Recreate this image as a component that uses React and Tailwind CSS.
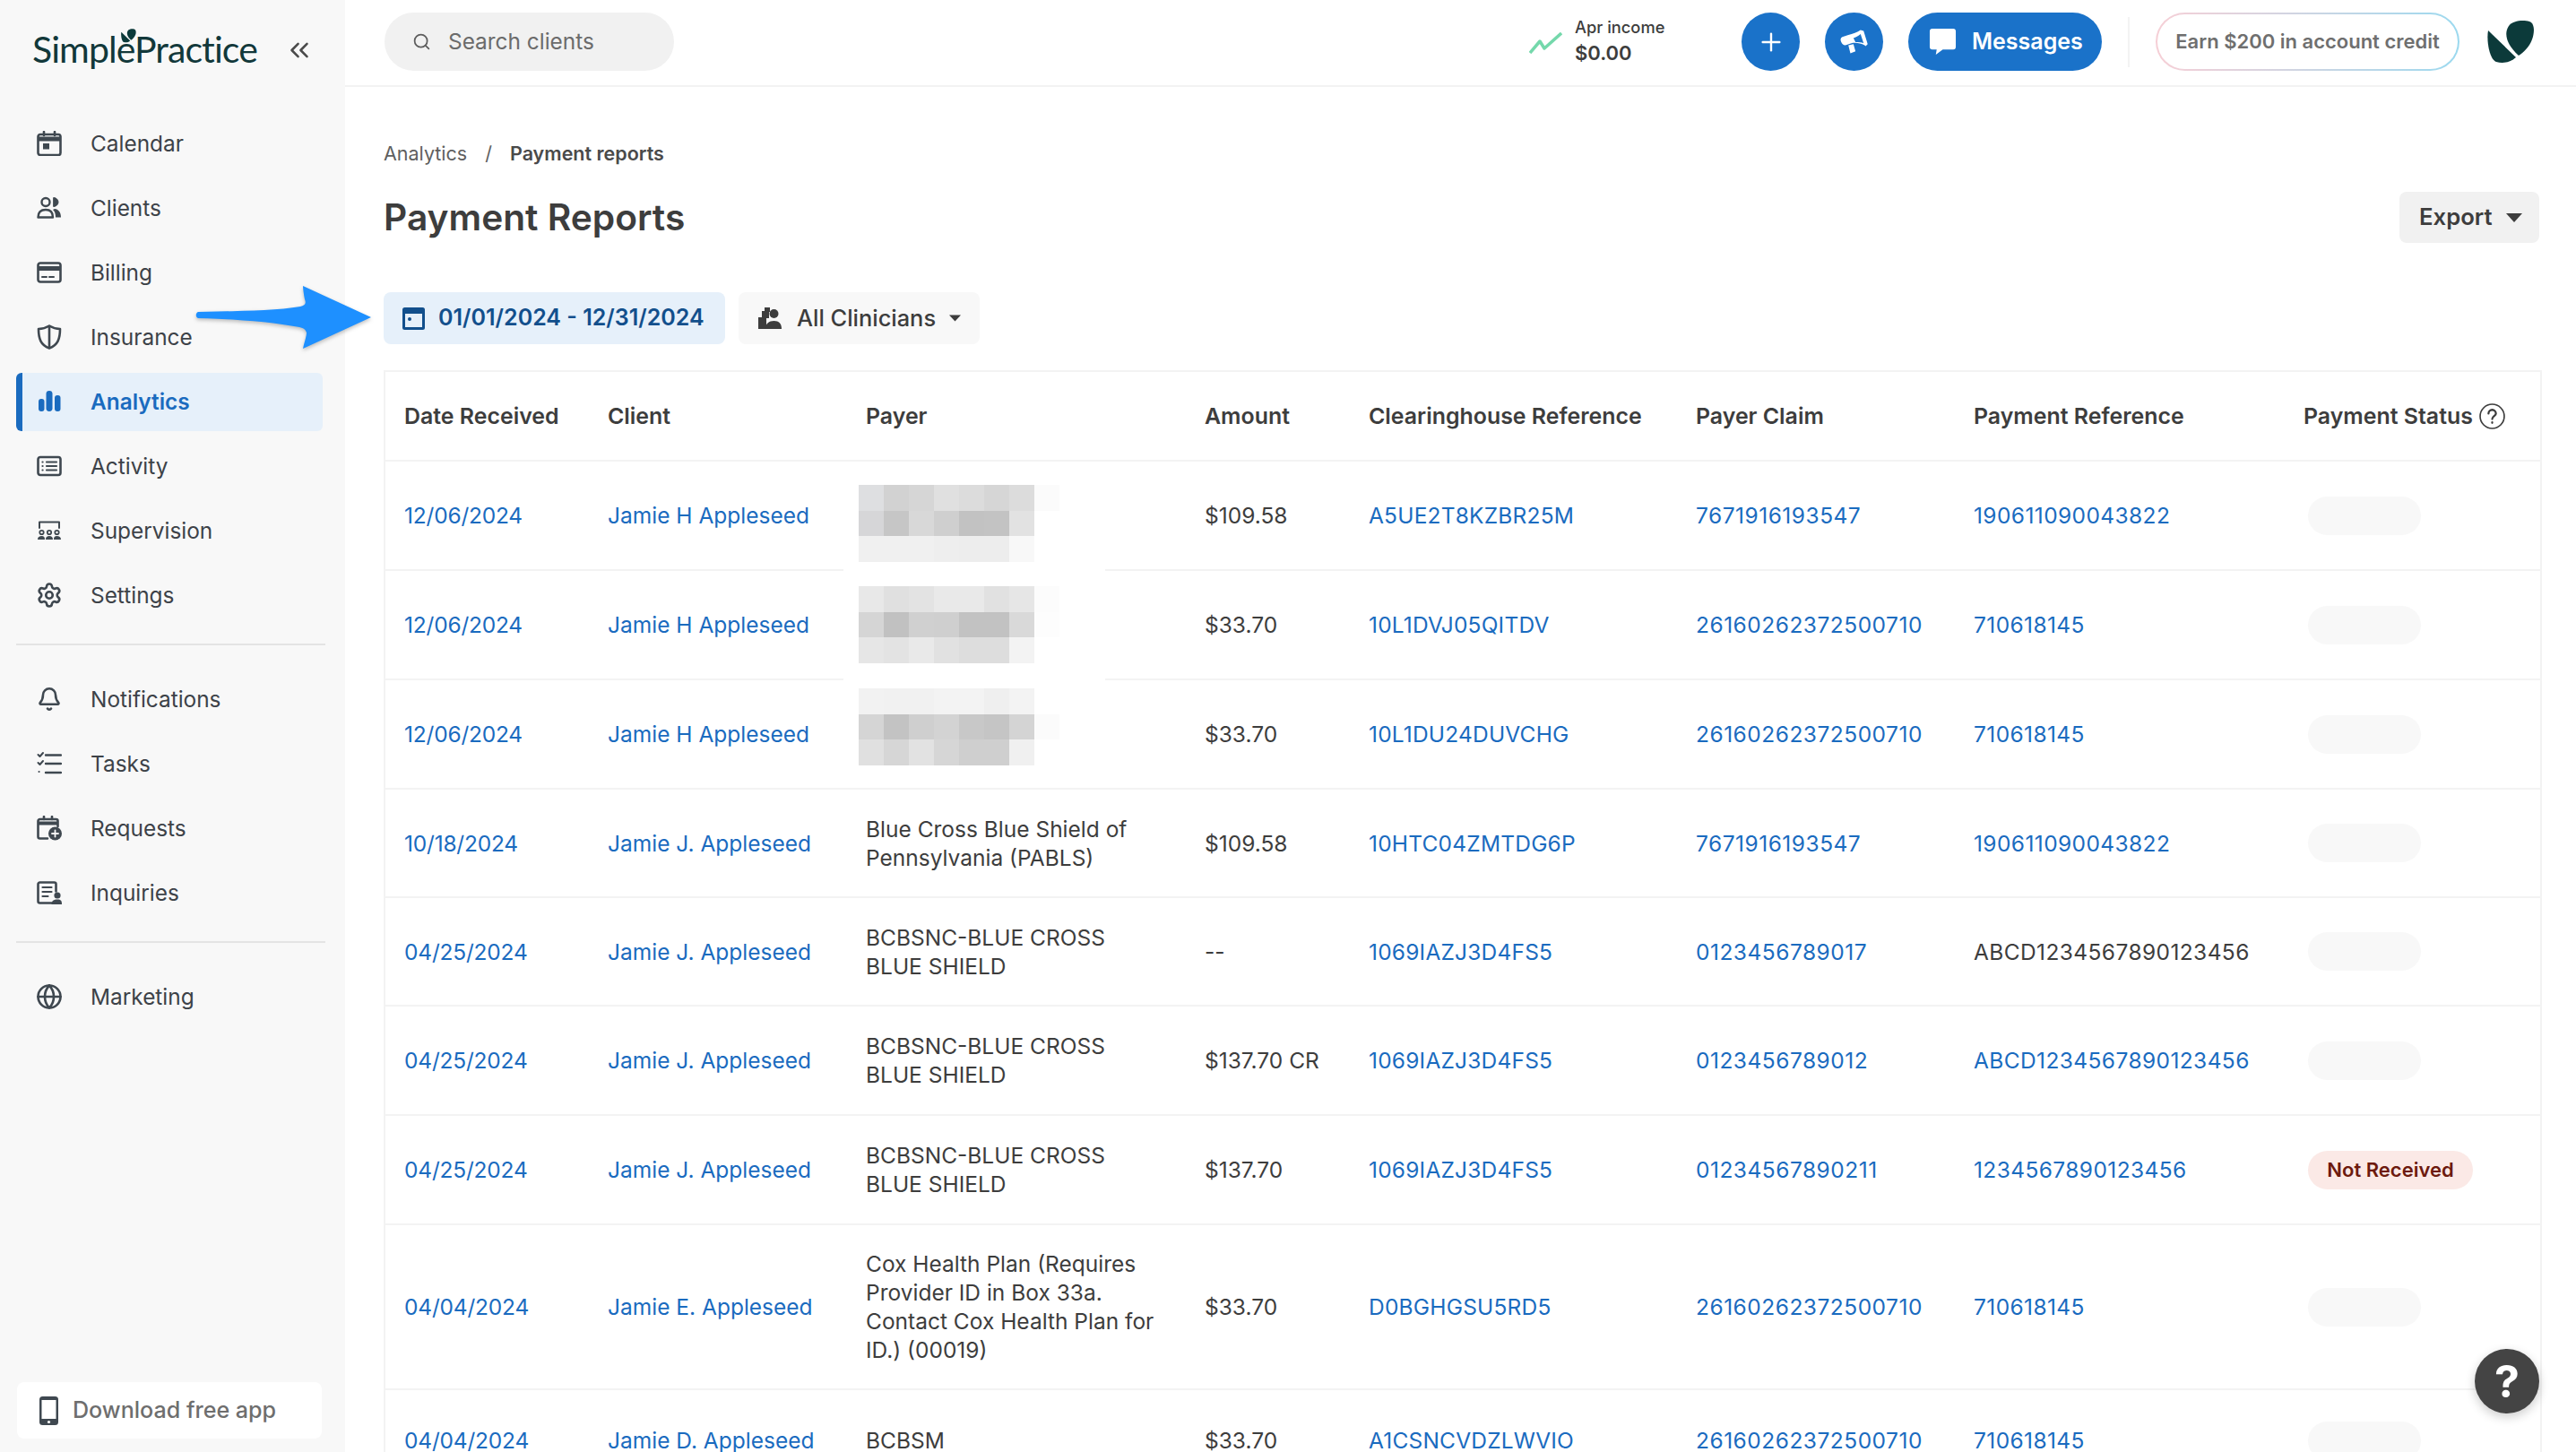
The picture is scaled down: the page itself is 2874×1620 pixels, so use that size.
import React from "react";
import { Search, Settings, Bell, Globe, Plus, ChevronsLeft } from "lucide-react";

const I = ({ children, cls = "text-[#3f4850]" }) => (
  <svg viewBox="0 0 28 28" className={`w-[28px] h-[28px] shrink-0 ${cls}`} fill="none" stroke="currentColor" strokeWidth="2.6" strokeLinecap="round" strokeLinejoin="round">{children}</svg>
);

const icons = {
  Calendar: <I><rect x="1.5" y="4" width="25" height="23" rx="2.5" /><path d="M1.5 9h25" strokeWidth="5" strokeLinecap="butt" /><path d="M8 1v4M20 1v4" /><rect x="7" y="14" width="7" height="6.5" fill="currentColor" stroke="none" /></I>,
  Clients: <I><circle cx="10" cy="7.5" r="4.5" strokeWidth="2.4" /><path d="M19 2.5a5 5 0 0 1 0 10z" fill="currentColor" stroke="currentColor" strokeWidth="1" /><path d="M1.5 24.5c0-6 3.5-8.5 8.5-8.5s8 2.5 8 8.5z" strokeWidth="2.4" /><path d="M20 15c4 .5 7 3.500 7 9.500h-6c0-4-1-7-3-8.500z" fill="currentColor" stroke="none" /></I>,
  Billing: <I><rect x="1.500" y="3.500" width="25" height="21" rx="2.500" /><path d="M1.500 9.500h25" strokeWidth="5" strokeLinecap="butt" /><path d="M6 19h5M14 19h5" strokeWidth="2" /></I>,
  Insurance: <I><path d="M14 1.500c4 2.500 8 3.500 12 3.500 0 11-2.500 18-12 21.500C4.500 23 2 16 2 5c4 0 8-1 12-3.500z" /><path d="M14 2v24" /></I>,
  Analytics: <I cls="text-[#1a6bbf]"><rect x="2" y="11" width="6.500" height="14" rx="3" fill="currentColor" stroke="none" /><rect x="10.500" y="2" width="7" height="23" rx="3.400" fill="currentColor" stroke="none" /><rect x="20" y="7" width="6.500" height="18" rx="3" fill="currentColor" stroke="none" /></I>,
  Activity: <I><rect x="1.500" y="4" width="25" height="20" rx="2.500" /><path d="M6.500 9.500h.1M6.500 14h.1M6.500 18.500h.1M11 9.500h11M11 14h11M11 18.500h11" strokeWidth="2.200" /></I>,
  Supervision: <I><path d="M3 11V4.500h22V11" strokeWidth="2" /><circle cx="5.500" cy="16" r="2.200" strokeWidth="1.800" /><circle cx="14" cy="16" r="2.200" strokeWidth="1.800" /><circle cx="22.500" cy="16" r="2.200" strokeWidth="1.800" /><path d="M1 24c0-3 2-4 4.500-4s3.500 1 3.500 4zM10 24c0-3 1.500-4 4-4s4 1 4 4zM19 24c0-3 1-4 3.500-4s4.500 1 4.500 4z" fill="currentColor" stroke="none" /></I>,
  Settings: <Settings className="w-[30px] h-[30px] text-[#3f4850] -ml-[1px] shrink-0" strokeWidth={2.1} />,
  Notifications: <Bell className="w-[28px] h-[28px] text-[#3f4850] shrink-0" strokeWidth={2.200} />,
  Tasks: <I><path d="M1.500 4l2 2 3.500-4M1.500 13l2 2 3.500-4M2.500 23h.1" strokeWidth="2" /><path d="M10 4.500h17M10 14h17M10 24h17" strokeWidth="2.400" /></I>,
  Requests: <I><path d="M12 25.500H3.500a2 2 0 0 1-2-2V6a2 2 0 0 1 2-2h18a2 2 0 0 1 2 2v6" /><path d="M1.500 8.500h22" strokeWidth="4" strokeLinecap="butt" /><path d="M8 1v3M17 1v3" /><circle cx="20.500" cy="20" r="7.500" fill="currentColor" stroke="none" /><path d="M20.500 16.500v7M17 20h7" stroke="#f8f8f8" strokeWidth="1.800" /></I>,
  Inquiries: <I><path d="M17 25.500H3.500a2 2 0 0 1-2-2v-19a2 2 0 0 1 2-2h16a2 2 0 0 1 2 2v8" /><path d="M6.500 8h10M6.500 13h10M6.500 18h6" strokeWidth="2.200" /><circle cx="23" cy="17" r="3.600" fill="currentColor" stroke="none" /><path d="M16.500 27c0-4 2.500-5.500 6.500-5.500s5 1.500 5 5.500z" fill="currentColor" stroke="none" /></I>,
  Marketing: <Globe className="w-[30px] h-[30px] text-[#3f4850] -ml-[1px] shrink-0" strokeWidth={2.100} />,
};

const Leaf = ({ cls }) => (
  <svg viewBox="0 0 53 50" className={cls} fill="#0c3a3a">
    <path d="M35 40C22 28 18 16 24 7 28 1 40 0 47 2c6 2 6 12 3 20-3 8-9 14-15 18z" />
    <path d="M1 12l31 30c-6 6-15 7-22 5C2 44-1 22 1 12z" />
  </svg>
);

const NavItem = ({ label, active }) => (
  <div className={`h-[72px] py-[3.500px] ml-[18px] ${active ? "mr-[25px]" : "mr-[18px]"}`}>
    <div className={`h-full flex items-center rounded-[6px] pl-[23px] ${active ? "bg-[#e6f0fa] border-l-[7px] border-[#1a6bbf] !pl-[16px]" : ""}`}>
      <span className="w-[60px] flex shrink-0">{icons[label]}</span>
      <span className={`text-[24.400px] ${active ? "font-semibold text-[#1a6bbf]" : "text-[#3d4248]"}`}>{label}</span>
    </div>
  </div>
);

const Sidebar = () => (
  <aside className="w-[385px] shrink-0 h-full bg-[#f8f8f8] flex flex-col">
    <div className="h-[124px] shrink-0 relative pl-[36px] pt-[27px] flex items-start">
      <span className="relative text-[41px] leading-[56px] text-[#12383a] tracking-[-0.9px] font-['Lato',sans-serif]">
        SimplePractice
        <Leaf cls="absolute left-[99px] top-[5px] w-[17px] h-[16px]" />
      </span>
      <ChevronsLeft className="absolute left-[317px] top-[39px] w-[34px] h-[34px] text-[#4a4a4a]" strokeWidth={1.800} />
    </div>
    {["Calendar", "Clients", "Billing", "Insurance", "Analytics", "Activity", "Supervision", "Settings"].map((l) => <NavItem key={l} label={l} active={l === "Analytics"} />)}
    <div className="h-[2px] bg-[#e4e4e4] mx-[18px] mt-[18px] mb-[24px] w-[345px]" />
    {["Notifications", "Tasks", "Requests", "Inquiries"].map((l) => <NavItem key={l} label={l} />)}
    <div className="h-[2px] bg-[#e4e4e4] mx-[18px] mt-[18px] mb-[24px] w-[345px]" />
    <NavItem label="Marketing" />
    <div className="mt-auto mb-[15px] ml-[19px] w-[340px] h-[63px] bg-white rounded-[8px] flex items-center pl-[25px] gap-[16px]">
      <svg viewBox="0 0 21 32" className="w-[21px] h-[32px]"><rect width="21" height="32" rx="3.500" fill="#3f4850" /><rect x="2.500" y="4" width="16" height="21" fill="#fff" /><circle cx="10.500" cy="28.500" r="1.600" fill="#fff" /></svg>
      <span className="text-[25.100px] font-medium text-[#6e6e6e]">Download free app</span>
    </div>
  </aside>
);

const Header = () => (
  <header className="h-[97px] shrink-0 border-b-2 border-[#f3f3f3] flex items-start pt-[14px] pl-[44px] pr-[46px]">
    <div className="w-[323px] h-[65px] rounded-full bg-[#f1f1f1] flex items-center pl-[31px] gap-[19px]">
      <Search className="w-[21px] h-[21px] text-[#5d5d5d]" strokeWidth={2} />
      <span className="text-[24.400px] text-[#6b6b6b]">Search clients</span>
    </div>
    <div className="ml-auto flex items-center h-[65px]">
      <svg viewBox="0 0 37 24" className="w-[37px] h-[24px] mr-[14px] mt-[2px]" fill="none" stroke="#74d8ab" strokeWidth="3.500" strokeLinejoin="round"><path d="M1 23l11-13 5 8L36 1" /></svg>
      <div className="w-[186px] text-[#3d3d3d] -mt-[4px]">
        <div className="text-[18.300px] leading-[28px] font-medium">Apr income</div>
        <div className="text-[22px] leading-[30px] font-semibold">$0.00</div>
      </div>
      <div className="w-[65px] h-[65px] rounded-full bg-[#1a72c9] flex items-center justify-center">
        <Plus className="w-[32px] h-[32px] text-white" strokeWidth={1.800} />
      </div>
      <div className="w-[65px] h-[65px] rounded-full bg-[#1a72c9] flex items-center justify-center ml-[28px]">
        <svg viewBox="0 0 30 30" className="w-[34px] h-[34px]" fill="#fff"><path d="M21 3l3 1 4 13-2 2-1-1c-4-2-9-3-13-2l-6 2c-2 0-3-1-4-3s-1-4 1-5l6-2c4-1 9-3 12-5zM21 7c-2 2-5 3-7 4l2 4c3 0 6 0 8 1zM9 18l5-1 2 7-5 2z" /></svg>
      </div>
      <div className="h-[65px] w-[216px] rounded-full bg-[#1a72c9] flex items-center pl-[23px] gap-[17px] ml-[28px]">
        <svg viewBox="0 0 32 32" className="w-[31px] h-[31px]" fill="#fff"><path d="M4 1h24a3 3 0 0 1 3 3v18a3 3 0 0 1-3 3H16l-8 6 1-6H4a3 3 0 0 1-3-3V4a3 3 0 0 1 3-3z" /></svg>
        <span className="text-[25px] font-semibold text-white">Messages</span>
      </div>
      <div className="w-[2px] h-[56px] bg-[#f3f3f3] mx-[29px]" />
      <div className="w-[339px] h-[65px] rounded-full p-[2px] bg-gradient-to-r from-[#f6cfd6] to-[#9bd9ef]">
        <div className="w-full h-full rounded-full bg-white flex items-center justify-center">
          <span className="text-[22px] font-semibold text-[#6f6f6f]">Earn $200 in account credit</span>
        </div>
      </div>
      <Leaf cls="w-[53px] h-[50px] ml-[31px]" />
    </div>
  </header>
);

const blurData = [
  { top: 9, cells: ["#dedfe1", "#d2d2d2", "#d6d6d6", "#e0e0e0", "#dcdcdc", "#d6d6d6", "#dcdcdc", "#fbfbfb", "#d6d6d8", "#c6c6c6", "#d8d8d8", "#cfcfcf", "#c2c2c2", "#c3c3c3", "#e2e2e2", "#fff", "#f0f0f0", "#f0f0f0", "#f0f0f0", "#eeeeee", "#ededed", "#ededed", "#f8f8f8", "#fff"] },
  { top: 0, cells: ["#e8e8e8", "#e0e0e0", "#e3e3e3", "#e9e9e9", "#e9e9e9", "#e1e1e1", "#e6e6e6", "#fcfcfc", "#d5d5d5", "#c1c1c1", "#d0d0d0", "#cfcfcf", "#c2c2c2", "#c2c2c2", "#d9d9d9", "#fdfdfd", "#e6e6e6", "#e3e3e3", "#e9e9e9", "#e1e1e1", "#dddddd", "#dddddd", "#f3f3f3", "#fff"] },
  { top: -8, cells: ["#f2f2f2", "#f1f1f1", "#f1f1f1", "#f3f3f3", "#f3f3f3", "#efefef", "#f3f3f3", "#fff", "#d5d5d5", "#c3c3c3", "#cfcfcf", "#d3d3d3", "#c8c8c8", "#c5c5c5", "#d4d4d4", "#fbfbfb", "#e0e0e0", "#d6d6d6", "#e2e2e2", "#d6d6d6", "#cfcfcf", "#cfcfcf", "#f0f0f0", "#fff"] },
];

const Blur = ({ v }) => (
  <div className="relative grid grid-cols-[repeat(8,28px)] grid-rows-[repeat(3,28.400px)] w-[224px] -ml-[8px]" style={{ top: blurData[v].top }}>
    {blurData[v].cells.map((c, i) => <div key={i} style={{ backgroundColor: c }} />)}
  </div>
);

const L = ({ children, cls = "" }) => <span className={`text-[#1a6bbf] ${cls}`}>{children}</span>;

const rows = [
  { h: 122, d: "12/06/2024", c: "Jamie H Appleseed", blur: 0, a: "$109.58", r: "A5UE2T8KZBR25M", cl: "7671916193547", p: "190611090043822" },
  { h: 122, d: "12/06/2024", c: "Jamie H Appleseed", blur: 1, a: "$33.70", r: "10L1DVJ05QITDV", cl: "26160262372500710", p: "710618145" },
  { h: 122, d: "12/06/2024", c: "Jamie H Appleseed", blur: 2, a: "$33.70", r: "10L1DU24DUVCHG", cl: "26160262372500710", p: "710618145" },
  { h: 121, d: "10/18/2024", c: "Jamie J. Appleseed", pay: "Blue Cross Blue Shield of Pennsylvania (PABLS)", a: "$109.58", r: "10HTC04ZMTDG6P", cl: "7671916193547", p: "190611090043822" },
  { h: 121, d: "04/25/2024", c: "Jamie J. Appleseed", pay: "BCBSNC-BLUE CROSS BLUE SHIELD", a: "--", r: "1069IAZJ3D4FS5", cl: "0123456789017", p: "ABCD1234567890123456", pPlain: true },
  { h: 122, d: "04/25/2024", c: "Jamie J. Appleseed", pay: "BCBSNC-BLUE CROSS BLUE SHIELD", a: "$137.70 CR", r: "1069IAZJ3D4FS5", cl: "0123456789012", p: "ABCD1234567890123456" },
  { h: 122, d: "04/25/2024", c: "Jamie J. Appleseed", pay: "BCBSNC-BLUE CROSS BLUE SHIELD", a: "$137.70", r: "1069IAZJ3D4FS5", cl: "01234567890211", p: "1234567890123456", notReceived: true },
  { h: 184, d: "04/04/2024", c: "Jamie E. Appleseed", pay: "Cox Health Plan (Requires Provider ID in Box 33a. Contact Cox Health Plan for ID.) (00019)", a: "$33.70", r: "D0BGHGSU5RD5", cl: "26160262372500710", p: "710618145" },
  { h: 114, d: "04/04/2024", c: "Jamie D. Appleseed", pay: "BCBSM", a: "$33.70", r: "A1CSNCVDZLWVIO", cl: "26160262372500710", p: "710618145" },
];

const heads = ["Date Received", "Client", "Payer", "Amount", "Clearinghouse Reference", "Payer Claim", "Payment Reference"];
const td = "pl-[21px] border-b-2 border-[#f3f3f3] align-middle";

const Table = () => (
  <table className="mt-[29px] w-[2404px] table-fixed border-separate border-spacing-0 border-t-2 border-l-2 border-r-2 border-[#f3f3f3] text-[24.500px] leading-[32px] text-[#3d3d3d]">
    <colgroup>
      {[227, 288, 378, 183, 365, 310, 368, 285].map((w, i) => <col key={i} className="" style={{ width: w }} />)}
    </colgroup>
    <thead>
      <tr className="h-[100px]">
        {heads.map((h) => <th key={h} className={`${td} text-left font-semibold text-[24.900px]`}>{h}</th>)}
        <th className={`${td} text-left font-semibold text-[24.900px]`}>
          <span className="flex items-center gap-[7px] whitespace-nowrap">Payment Status
            <svg viewBox="0 0 28 28" className="w-[29px] h-[29px]" fill="none" stroke="#3d3d3d" strokeWidth="1.600"><circle cx="14" cy="14" r="13" /><path d="M10 11a4 4 0 0 1 8 0c0 2.500-4 3-4 6M14 20.500v.5" strokeWidth="2.200" strokeLinecap="round" /></svg>
          </span>
        </th>
      </tr>
    </thead>
    <tbody>
      {rows.map((r, i) => (
        <tr key={i} style={{ height: r.h }}>
          <td className={td}><L cls="tracking-[-0.2px]">{r.d}</L></td>
          <td className={td}><L>{r.c}</L></td>
          <td className={`${td} pr-[26px] relative`}>
            {r.blur !== undefined ? <Blur v={r.blur} /> : r.pay}
            {r.blur !== undefined && r.blur < 2 && <span className="absolute left-[-4px] bottom-[-8px] w-[292px] h-[16px] bg-white" />}
          </td>
          <td className={td}>{r.a}</td>
          <td className={td}><L cls="tracking-[0.2px]">{r.r}</L></td>
          <td className={td}><L cls="tracking-[0.5px]">{r.cl}</L></td>
          <td className={`${td} tracking-[0.4px]`}>{r.pPlain ? r.p : <L>{r.p}</L>}</td>
          <td className={td}>
            {r.notReceived
              ? <span className="ml-[5px] inline-flex items-center justify-center w-[184px] h-[43px] rounded-full bg-[#fbe9e6] text-[#6d1a0e] text-[22px] font-semibold">Not Received</span>
              : <span className="ml-[5px] block w-[126px] h-[43px] rounded-full bg-[#f8f8f8]" />}
          </td>
        </tr>
      ))}
    </tbody>
  </table>
);

const Caret = ({ cls = "" }) => <svg viewBox="0 0 18 10" className={cls}><path d="M0 0h18L9 10z" fill="currentColor" /></svg>;

export default function App() {
  return (
    <div className="relative flex w-[2874px] h-[1620px] overflow-hidden bg-white font-['Inter',sans-serif]">
      <Sidebar />
      <main className="flex-1 min-w-0 flex flex-col">
        <Header />
        <div className="pl-[43px] pr-[41px] pt-[58px]">
          <div className="flex items-center h-[32px] text-[21.500px] text-[#5f5f5f]">
            <span>Analytics</span>
            <span className="ml-[20px] mr-[20px]">/</span>
            <span className="font-semibold text-[#4a4a4a]">Payment reports</span>
          </div>
          <div className="mt-[27px] h-[57px] flex items-center justify-between">
            <h1 className="text-[40.700px] font-semibold text-[#3d3d3d]">Payment Reports</h1>
            <div className="w-[156px] h-[57px] rounded-[8px] bg-[#f1f1f1] flex items-center pl-[22px] gap-[15px] text-[25.700px] font-semibold text-[#3d3d3d]">
              Export <Caret cls="w-[18px] h-[10px]" />
            </div>
          </div>
          <div className="mt-[55px] flex gap-[15px]">
            <div className="w-[381px] h-[58px] rounded-[8px] bg-[#e6f0fa] flex items-center pl-[21px] gap-[15px] text-[25px] font-semibold text-[#124f8c]">
              <svg viewBox="0 0 25 25" className="w-[25px] h-[25px]"><rect width="25" height="25" rx="2.500" fill="#124f8c" /><rect x="3" y="7" width="19" height="15" fill="#e6f0fa" /><circle cx="8" cy="13" r="2" fill="#124f8c" /></svg>
              01/01/2024 - 12/31/2024
            </div>
            <div className="w-[269px] h-[58px] rounded-[8px] bg-[#f8f8f8] flex items-center pl-[21px] gap-[17px] text-[25.400px] font-medium text-[#3d3d3d]">
              <svg viewBox="0 0 27 26" className="w-[27px] h-[26px]" fill="#3d3d3d"><rect x="1" y="12" width="9" height="13" /><rect x="5" y="5" width="8" height="8" /><rect x="8" y="1" width="6" height="5" /><circle cx="18.500" cy="8" r="5" /><path d="M9 25c0-6 4-9 9.500-9s8.500 3 8.500 9z" /></svg>
              All Clinicians
              <Caret cls="w-[13px] h-[8px] -ml-[2px]" />
            </div>
          </div>
          <Table />
        </div>
      </main>
      <svg viewBox="0 0 200 74" className="absolute left-[218px] top-[316px] w-[200px] h-[74px] drop-shadow-[0_2px_2px_rgba(0,0,0,0.25)]"><path d="M3 32c40-1 85-1 114-6 5-1 7-3 5-8-1-5-2-12-2-15l76 35-76 35c2-9 4-14 4-18-1-3-3-5-8-6-30-6-70-9-113-10-3-1-3-6 0-7z" fill="#1e90ff" /></svg>
      <div className="absolute left-[2761px] top-[1505px] w-[72px] h-[72px] rounded-full bg-[#444444] shadow-[0_4px_12px_rgba(0,0,0,0.2)] flex items-center justify-center text-white text-[50px] font-bold">?</div>
    </div>
  );
}
